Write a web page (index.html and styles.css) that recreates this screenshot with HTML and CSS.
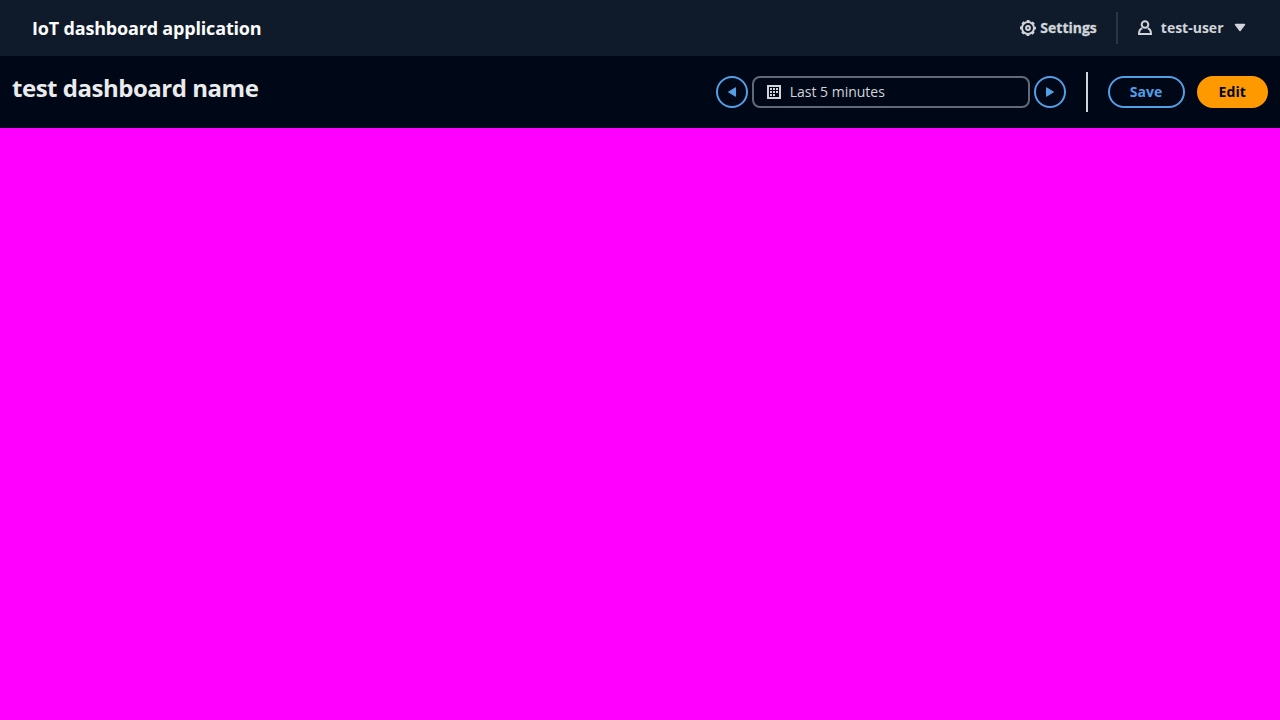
FILE: index.html
```html
<!DOCTYPE html>
<html lang="en">
<head>
<meta charset="utf-8">
<title>IoT dashboard application</title>
<link rel="stylesheet" href="styles.css">
</head>
<body>
<header class="topnav">
  <span class="brand">IoT dashboard application</span>
  <nav class="utilities">
    <a class="settings">
      <svg class="icon" viewBox="0 0 16 16"><circle cx="8" cy="8" r="6"/><circle class="teeth" cx="8" cy="8" r="7"/><circle cx="8" cy="8" r="1.900"/></svg>
      <span>Settings</span>
    </a>
    <span class="nav-divider"></span>
    <a class="user">
      <svg class="icon" viewBox="0 0 16 16"><circle cx="8" cy="4.500" r="3.300"/><path d="M5.300 8.300C3.200 9 2 11 2 14h12c0-3-1.200-5-3.300-5.700"/></svg>
      <span class="user-name">test-user</span>
      <svg class="icon caret" viewBox="0 0 16 16"><path d="M3.500 4.500h9l-4.500 6z"/></svg>
    </a>
  </nav>
</header>
<section class="toolbar">
  <h1 class="title">test dashboard name</h1>
  <div class="actions">
    <button class="round"><svg class="icon solid" viewBox="0 0 16 16"><path d="M11.500 3.700v8.600L4.500 8z"/></svg></button>
    <button class="range">
      <svg class="icon calendar" viewBox="0 0 16 16"><path d="M2 2h12v12H2z"/><path class="dots" d="M4 4h2v2H4zM7 4h2v2H7zM10 4h2v2h-2zM4 7h2v2H4zM7 7h2v2H7zM10 7h2v2h-2zM4 10h2v2H4zM7 10h2v2H7z"/></svg>
      <span>Last 5 minutes</span>
    </button>
    <button class="round"><svg class="icon solid" viewBox="0 0 16 16"><path d="M4.500 3.700v8.600l7-4.300z"/></svg></button>
    <span class="divider"></span>
    <button class="button save">Save</button>
    <button class="button edit">Edit</button>
  </div>
</section>
<main class="canvas"></main>
</body>
</html>
```
FILE: styles.css
```css
* { box-sizing: border-box; }
body {
  margin: 0;
  height: 100vh;
  display: flex;
  flex-direction: column;
  overflow: hidden;
  background: #000716;
  font-family: "Open Sans", sans-serif;
  font-size: 14px;
  line-height: 20px;
}
button {
  margin: 0;
  padding: 0;
  font: inherit;
  background: none;
  height: 32px;
}
.icon {
  width: 16px;
  height: 16px;
  flex: none;
  fill: none;
  stroke: currentColor;
  stroke-width: 2;
}
.topnav {
  height: 56px;
  flex: none;
  display: flex;
  align-items: center;
  justify-content: space-between;
  padding: 0 32px;
  background: #0f1b2a;
}
.brand {
  font-size: 18px;
  font-weight: 700;
  line-height: 22px;
  letter-spacing: -0.01em;
  color: #fbfbfb;
}
.utilities {
  display: flex;
  align-items: center;
  color: #d1d5db;
  font-weight: 700;
}
.settings, .user { display: flex; align-items: center; }
.settings { gap: 4px; -webkit-text-stroke: 0.3px currentColor; }
.teeth { stroke-dasharray: 2.8 2.698; stroke-dashoffset: 1.4; }
.nav-divider {
  width: 2px;
  height: 32px;
  margin: 0 19px;
  background: #2a3543;
}
.user-name { margin: 0 8.5px 0 8px; }
.caret { fill: currentColor; stroke-width: 1.5; stroke-linejoin: round; }
.toolbar {
  height: 72px;
  flex: none;
  display: flex;
  justify-content: space-between;
  padding: 16px 12px;
}
.title {
  margin: 0;
  font-size: 24px;
  font-weight: 700;
  line-height: 32px;
  letter-spacing: -0.02em;
  color: #e9ebed;
}
.actions { display: flex; align-items: center; height: 40px; }
.round {
  width: 32px;
  display: flex;
  align-items: center;
  justify-content: center;
  border: 2px solid #539fe5;
  border-radius: 50%;
  color: #539fe5;
}
.solid { fill: currentColor; stroke-linejoin: round; stroke-width: 1; }
.range {
  width: 278px;
  margin: 0 4px;
  padding: 0 12px;
  display: flex;
  align-items: center;
  gap: 8px;
  border: 2px solid #5f6b7a;
  border-radius: 8px;
  color: #d1d5db;
}
.calendar .dots { fill: currentColor; stroke: none; }
.divider {
  width: 2px;
  height: 40px;
  margin: 0 20px;
  background: #d1d5db;
}
.button {
  padding: 0 20px;
  border: 2px solid #539fe5;
  border-radius: 20px;
  font-weight: 700;
  letter-spacing: 0.008em;
}
.save { color: #539fe5; margin-right: 12px; }
.edit { color: #000716; background: #ff9900; border-color: #ff9900; }
.canvas { flex: 1; background: #ff00ff; }
```
